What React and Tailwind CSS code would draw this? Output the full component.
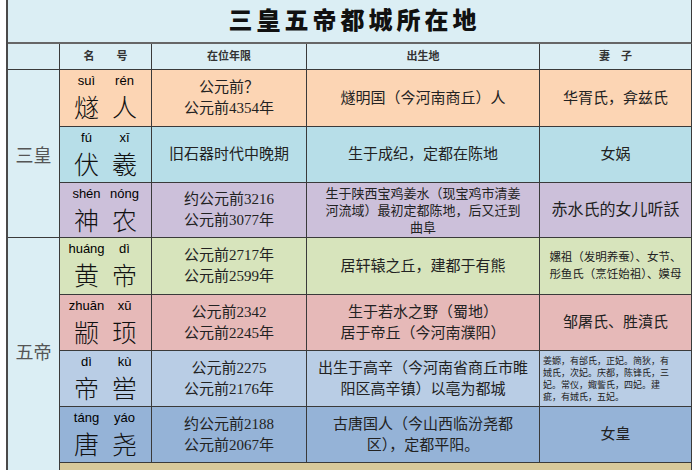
import React from 'react'

const cjk = { fontFamily: '"Liberation Serif", "Noto Sans CJK SC", serif' }
const sans = { fontFamily: '"Liberation Sans", "Noto Sans CJK SC", sans-serif' }

const rows = [
    { bg: 'bg-[#fcd5b4]', py: ['suì', 'rén'], zh: ['燧', '人'], years: ['公元前？', '公元前4354年'], born: ['燧明国（今河南商丘）人'], wife: ['华胥氏，弇兹氏'], wifeSize: 'text-[15px]' },
    { bg: 'bg-[#b7dee8]', py: ['fú', 'xī'], zh: ['伏', '羲'], years: ['旧石器时代中晚期'], born: ['生于成纪，定都在陈地'], wife: ['女娲'], wifeSize: 'text-[15px]' },
    { bg: 'bg-[#ccc0da]', py: ['shén', 'nóng'], zh: ['神', '农'], years: ['约公元前3216', '公元前3077年'], born: ['生于陕西宝鸡姜水（现宝鸡市清姜', '河流域）最初定都陈地，后又迁到', '曲阜'], bornSize: 'text-[13px] leading-[17px]', wife: ['赤水氏的女儿听訞'], wifeSize: 'text-[16px]' },
    { bg: 'bg-[#d7e4bc]', py: ['huáng', 'dì'], zh: ['黄', '帝'], years: ['公元前2717年', '公元前2599年'], born: ['居轩辕之丘，建都于有熊'], wife: ['嫘祖（发明养蚕）、女节、', '彤鱼氏（烹饪始祖）、嫫母'], wifeSize: 'text-[11.5px] leading-[17px]' },
    { bg: 'bg-[#e6b9b8]', py: ['zhuān', 'xū'], zh: ['颛', '顼'], years: ['公元前2342', '公元前2245年'], born: ['生于若水之野（蜀地）', '居于帝丘（今河南濮阳）'], wife: ['邹屠氏、胜濆氏'], wifeSize: 'text-[15px]' },
    { bg: 'bg-[#b9cde5]', py: ['dì', 'kù'], zh: ['帝', '喾'], years: ['公元前2275', '公元前2176年'], born: ['出生于高辛（今河南省商丘市睢', '阳区高辛镇）以亳为都城'], wife: ['姜嫄，有邰氏，正妃。简狄，有', '娀氏，次妃。庆都，陈锋氏，三', '妃。常仪，娵訾氏，四妃。建', '疵，有娀氏，五妃。'], wifeSize: 'text-[9px] leading-[12px] items-start text-left px-[3px]' },
    { bg: 'bg-[#95b3d7]', py: ['táng', 'yáo'], zh: ['唐', '尧'], years: ['约公元前2188', '公元前2067年'], born: ['古唐国人（今山西临汾尧都', '区），定都平阳。'], wife: ['女皇'], wifeSize: 'text-[15px]' },
]

const cell = 'border-r border-b border-[#3a3a3a]'

function Lines({ lines, className }) {
    return (
        <div className={`flex flex-col items-center justify-center text-center text-[#222] ${className}`} style={cjk}>
            {lines.map((l, i) => <span key={i}>{l}</span>)}
        </div>
    )
}

export default function App() {
    return (
        <div className="w-[700px] h-[470px] overflow-hidden bg-white pl-[6px]">
            <div className="grid grid-cols-[52px_92px_155px_233px_152px] grid-rows-[44px_26px_57px_56px_55px_57px_56px_56px_56px_40px] border-l-2 border-[#4a4a4a] w-[686px]">
                <div className={`col-span-5 ${cell} border-b-2 border-b-[#666] bg-[#dbeef4] flex items-center justify-center`}>
                    <span className="text-[24px] font-black tracking-[4px] text-[#111] pl-[10px]" style={cjk}>三皇五帝都城所在地</span>
                </div>
                <div className={`${cell} bg-[#dbeef4]`}></div>
                <div className={`${cell} bg-[#dbeef4] flex items-center justify-center text-[11px] font-bold text-[#333]`} style={cjk}>名　　号</div>
                <div className={`${cell} bg-[#dbeef4] flex items-center justify-center text-[11px] font-bold text-[#333]`} style={cjk}>在位年限</div>
                <div className={`${cell} bg-[#dbeef4] flex items-center justify-center text-[11px] font-bold text-[#333]`} style={cjk}>出生地</div>
                <div className={`${cell} bg-[#dbeef4] flex items-center justify-center text-[11px] font-bold text-[#333]`} style={cjk}>妻　子</div>

                {rows.map((r, i) => (
                    <React.Fragment key={i}>
                        {i === 0 && (
                            <div className={`row-span-3 ${cell} bg-[#dbeef4] flex items-center justify-center pt-[6px] text-[18px] text-[#555]`} style={cjk}>三皇</div>
                        )}
                        {i === 3 && (
                            <div className={`row-span-5 ${cell} bg-[#dbeef4] flex items-start justify-center pt-[102px] text-[18px] text-[#555]`} style={cjk}>五帝</div>
                        )}
                        <div className={`${cell} ${r.bg} flex justify-center`}>
                            <div className="flex gap-[4px] pt-[3px]">
                                {r.zh.map((z, j) => (
                                    <div key={j} className="w-[34px] flex flex-col items-center">
                                        <span className="text-[13px] leading-[15px] text-black" style={sans}>{r.py[j]}</span>
                                        <span className="text-[25px] leading-[36px] font-light text-[#111]" style={{ fontFamily: '"Noto Sans CJK SC", sans-serif' }}>{z}</span>
                                    </div>
                                ))}
                            </div>
                        </div>
                        <div className={`${cell} ${r.bg}`}>
                            <Lines lines={r.years} className="h-full text-[15px] leading-[21px]" />
                        </div>
                        <div className={`${cell} ${r.bg}`}>
                            <Lines lines={r.born} className={`h-full ${r.bornSize || 'text-[15px] leading-[21px]'}`} />
                        </div>
                        <div className={`${cell} ${r.bg}`}>
                            <Lines lines={r.wife} className={`h-full ${r.wifeSize}`} />
                        </div>
                    </React.Fragment>
                ))}

                <div className={`col-span-4 ${cell} bg-[#d8c99b]`}></div>
            </div>
        </div>
    )
}
